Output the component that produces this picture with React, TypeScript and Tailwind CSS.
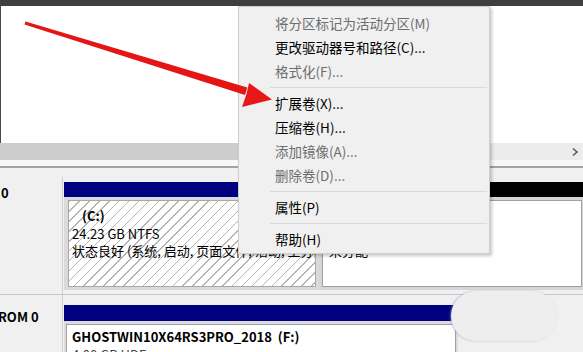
import React from "react";

type Item = { label: string; disabled?: boolean } | { sep: true };

const items: Item[] = [
  { label: "将分区标记为活动分区(M)", disabled: true },
  { label: "更改驱动器号和路径(C)..." },
  { label: "格式化(F)...", disabled: true },
  { sep: true },
  { label: "扩展卷(X)..." },
  { label: "压缩卷(H)..." },
  { label: "添加镜像(A)...", disabled: true },
  { label: "删除卷(D)...", disabled: true },
  { sep: true },
  { label: "属性(P)" },
  { sep: true },
  { label: "帮助(H)" },
];

function ContextMenu() {
  return (
    <div className="absolute left-[238px] top-[6px] w-[252px] bg-[#f0f0f0] border border-[#cfcfcf] shadow-[2px_2px_3px_rgba(0,0,0,0.22)] pt-[4px] pb-[2px]">
      {items.map((it, i) =>
        "sep" in it ? (
          <div key={i} className="h-[8px] flex items-center pl-[31px] pr-[2px]">
            <div className="h-px w-full bg-[#d9d9d9]" />
          </div>
        ) : (
          <div
            key={i}
            className={
              "h-[24px] flex items-center pl-[36px] text-[13.5px] whitespace-nowrap " +
              (it.disabled ? "text-[#6d6d6d]" : "text-black")
            }
          >
            {it.label}
          </div>
        )
      )}
    </div>
  );
}

function RedArrow() {
  return (
    <svg className="absolute left-0 top-0 pointer-events-none" width="583" height="352" viewBox="0 0 583 352">
      <polygon points="25.5,21.4 24.5,24.6 245,95 247.3,87.4" fill="#e31515" />
      <polygon points="249,83 272,99.5 242,107 246.5,94" fill="#e81818" />
    </svg>
  );
}

export default function App() {
  return (
    <div className="relative w-[583px] h-[352px] overflow-hidden bg-[#f0f0f0] font-['Noto_Sans_CJK_SC','Noto_Sans',sans-serif] flex flex-col">
      <div className="h-[6px] shrink-0 bg-[#3f3f3f]" />
      <div className="h-[137px] shrink-0 bg-white border-l border-[#4a4a4a]" />
      <div className="h-[17px] shrink-0 flex bg-[#ececec]">
        <div className="w-[420px] bg-[#cdcdcd]" />
        <div className="flex-1" />
        <div className="w-[17px] flex items-center justify-center">
          <svg width="8" height="10" viewBox="0 0 8 10">
            <path d="M2 1.5 L6 5 L2 8.5" fill="none" stroke="#5a5a5a" strokeWidth="1.6" />
          </svg>
        </div>
      </div>
      <div className="h-[6px] shrink-0 bg-[#f7f7f7]" />
      <div className="h-[2px] shrink-0 bg-[#a3a3a3]" />
      <div className="h-[9px] shrink-0" />

      {/* Disk 0 row */}
      <div className="h-[118px] shrink-0 flex border-b border-[#c8c8c8]">
        <div className="w-[63px] shrink-0 border-r border-[#cfcfcf] pt-[7px] pl-[1px] text-[13px] leading-[18px] font-bold text-black">
          0
        </div>
        <div className="flex-1 flex pt-[5px] pb-[4px] pl-[1px]">
          <div className="w-[255px] flex flex-col">
            <div className="h-[15px] bg-[#000080]" />
            <div className="flex-1 bg-[#dadada] p-[3px] pl-[4px]">
              <div className="h-full border border-[#a8a8a8] bg-[repeating-linear-gradient(135deg,#b4b4b4_0px,#b4b4b4_1px,#ffffff_1px,#ffffff_7px)] pt-[6px] pl-[3px] overflow-hidden whitespace-nowrap text-[13px] leading-[17.5px] text-black">
                <div className="font-bold ml-[10px]">(C:)</div>
                <div>24.23 GB NTFS</div>
                <div>状态良好 (系统, 启动, 页面文件, 活动, 主分区)</div>
              </div>
            </div>
          </div>
          <div className="flex-1 flex flex-col">
            <div className="h-[15px] bg-black" />
            <div className="flex-1 bg-[#d6d6d6] p-[3px] pr-[1px]">
              <div className="h-full border border-[#a0a0a0] bg-white pt-[6px] pl-[6px] text-[13px] leading-[17.5px] text-black whitespace-nowrap overflow-hidden">
                <div>&nbsp;</div>
                <div>35.77 GB</div>
                <div>未分配</div>
              </div>
            </div>
          </div>
        </div>
      </div>

      {/* CD-ROM row */}
      <div className="flex-1 flex">
        <div className="w-[63px] shrink-0 border-r border-[#cfcfcf] pt-[13px] text-[13px] leading-[18px] font-bold text-black whitespace-nowrap overflow-hidden">
          <span className="-ml-[2px] block">ROM 0</span>
        </div>
        <div className="flex-1 pt-[10px] pl-[1px]">
          <div className="w-[394px] h-full flex flex-col">
            <div className="h-[16px] bg-[#000080]" />
            <div className="flex-1 bg-[#dcdcdc] pt-[3px] px-[2px]">
              <div className="h-full border border-[#a0a0a0] border-b-0 bg-white pt-[3px] pl-[5px] text-[13px] leading-[18px] text-black whitespace-nowrap overflow-hidden">
                <div className="font-bold">GHOSTWIN10X64RS3PRO_2018&nbsp;&nbsp;(F:)</div>
                <div className="text-[#444]">4.00 GB UDF</div>
              </div>
            </div>
          </div>
        </div>
      </div>

      {/* watermark blob */}
      <div className="absolute left-[451px] top-[291px] w-[106px] h-[50px] rounded-[25px] bg-[#eeeeef] shadow-[-1px_0_2px_rgba(150,150,215,0.6)]" />

      <ContextMenu />
      <RedArrow />
    </div>
  );
}
